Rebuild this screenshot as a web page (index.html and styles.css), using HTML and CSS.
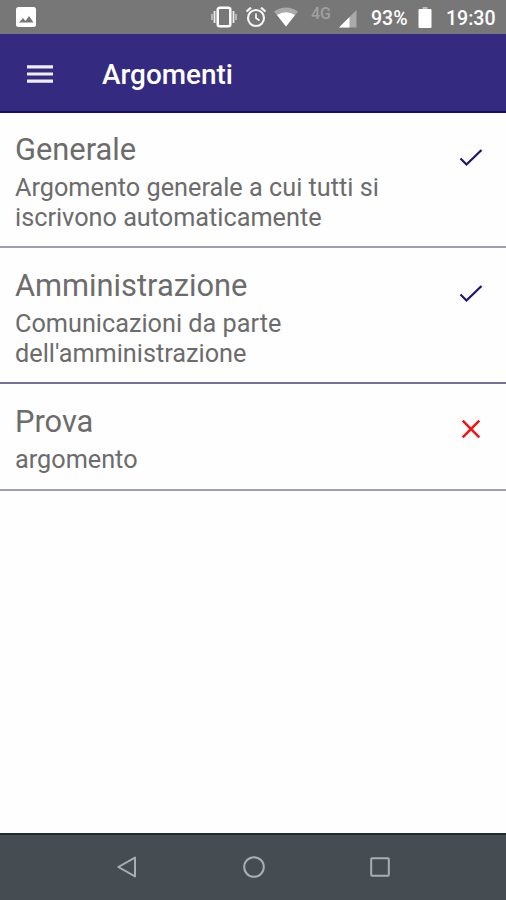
FILE: index.html
```html
<!DOCTYPE html>
<html lang="it">
<head>
<meta charset="utf-8">
<title>Argomenti</title>
<link rel="stylesheet" href="styles.css">
</head>
<body>
<div class="status">
  <svg class="photo" width="20" height="20" viewBox="0 0 20 20"><rect width="20" height="20" rx="2.5" fill="#fff"/><path d="M3 15.500L7 11l2.500 3 3.500-5 4.500 6.500z" fill="#777"/></svg>
  <svg class="vibrate" width="26" height="22" viewBox="0 0 26 22" fill="none" stroke="#fff"><rect x="6.700" y="1.700" width="12.600" height="18.600" rx="2" stroke-width="2.500"/><path d="M3.500 5v12M22.500 5v12" stroke-width="1.800" opacity=".85"/><path d="M1 8v6M25 8v6" stroke-width="1.400" opacity=".65"/></svg>
  <svg class="alarm" width="22" height="22" viewBox="0 0 22 22" fill="none" stroke="#f4f4f4" stroke-width="2.200"><circle cx="11" cy="12" r="8"/><path d="M1.500 5.500L6 1.700M20.500 5.500L16 1.700"/><path d="M11 7.500V12l3.500 2.500" stroke-width="1.800"/></svg>
  <svg class="wifi" width="24" height="20" viewBox="0 0 24 20"><path d="M0 4.500Q12-3.500 24 4.500L12 19.500z" fill="#aaa"/><path d="M3 8Q12 2.500 21 8L12 19.500z" fill="#fff"/></svg>
  <span class="network">4G</span>
  <svg class="signal" width="18" height="18" viewBox="0 0 18 18"><path d="M0 17.500L17.500 0v17.500z" fill="#aaa"/><path d="M0 17.500L10.500 7v10.500z" fill="#fff"/></svg>
  <span class="percent">93%</span>
  <svg class="battery" width="14" height="21" viewBox="0 0 14 21"><path d="M4.500 0h5v2h-5z" fill="#bbb"/><rect x=".5" y="2" width="13" height="19" rx="1" fill="#fff"/></svg>
  <span class="time">19:30</span>
</div>
<header class="appbar">
  <svg width="28" height="20" viewBox="0 0 28 20" stroke="#eeedf8" stroke-width="3.200"><path d="M1 2.800h26M1 10h26M1 17.200h26"/></svg>
  <h1>Argomenti</h1>
</header>
<main>
  <section class="topic">
    <div><h2>Generale</h2><p>Argomento generale a cui tutti si<br>iscrivono automaticamente</p></div>
    <svg class="mark" width="24" height="24" viewBox="0 0 24 24"><path d="M1.500 12.500L7.500 18.500 22.500 4"/></svg>
  </section>
  <section class="topic middle">
    <div><h2>Amministrazione</h2><p>Comunicazioni da parte<br>dell'amministrazione</p></div>
    <svg class="mark" width="24" height="24" viewBox="0 0 24 24"><path d="M1.500 12.500L7.500 18.500 22.500 4"/></svg>
  </section>
  <section class="topic last">
    <div><h2>Prova</h2><p>argomento</p></div>
    <svg class="mark off" width="24" height="24" viewBox="0 0 24 24"><path d="M3.700 3.700l16.600 16.600M20.300 3.700L3.700 20.300"/></svg>
  </section>
</main>
<nav class="navbar">
  <svg width="24" height="24" viewBox="0 0 24 24"><path d="M3.300 12L20 2.600v18.800z"/></svg>
  <svg width="24" height="24" viewBox="0 0 24 24"><circle cx="12" cy="12" r="9.800"/></svg>
  <svg width="24" height="24" viewBox="0 0 24 24"><rect x="3.200" y="3.200" width="17.600" height="17.600" rx="1"/></svg>
</nav>
</body>
</html>
```
FILE: styles.css
```css
* { box-sizing: border-box; }
body {
  margin: 0;
  height: 900px;
  display: flex;
  flex-direction: column;
  overflow: hidden;
  background: #fefefe;
  color: #6c6c6c;
  font-family: Roboto, "Liberation Sans", sans-serif;
}
h1, h2, p { margin: 0; }
svg { display: block; flex: none; }
.status {
  height: 34px;
  flex: none;
  display: flex;
  align-items: center;
  padding-left: 16px;
  background: #777;
  color: #fff;
  font-size: 19.5px;
  font-weight: 500;
  white-space: nowrap;
}
.photo { margin: 0 175px 0 0; }
.alarm { margin-left: 8px; }
.wifi { margin-left: 7px; }
.network { width: 21px; margin: -7px 0 0 13px; font-size: 16px; font-weight: 500; color: #a0a0a0; }
.signal { margin: 3px 0 0 7px; }
.percent { width: 38px; margin: 2px 0 0 14px; }
.battery { margin: 0 0 0 9px; }
.time { margin: 2px 0 0 14px; }
.appbar {
  height: 79px;
  flex: none;
  display: flex;
  align-items: center;
  padding: 2px 0 0 26px;
  background: #342a80;
  border-bottom: 2px solid #1b0c69;
  color: #fff;
}
h1 { margin: 3px 0 0 48px; font-size: 27.9px; line-height: 32px; font-weight: 500; }
main { flex: 1; }
.topic {
  height: 135px;
  display: flex;
  justify-content: space-between;
  padding: 19px 23px 0 15px;
  border-bottom: 2px solid #a19db5;
}
.middle { height: 136px; padding-top: 20px; border-color: #747099; }
.last { height: 107px; padding-top: 20px; }
h2 { font-size: 30.8px; line-height: 36px; font-weight: 400; }
p { margin-top: 5px; font-size: 25.25px; line-height: 29.5px; }
.mark { margin-top: 14px; fill: none; stroke: #211572; stroke-width: 2.3; }
.off { margin-top: 13px; stroke: #f01418; stroke-width: 2.6; }
.navbar {
  height: 67px;
  flex: none;
  display: flex;
  justify-content: center;
  gap: 102.5px;
  padding: 20px 0 0 1px;
  background: #454d52;
  border-top: 2px solid #1d2b2d;
}
.navbar svg { fill: none; stroke: #a8afb1; stroke-width: 2; stroke-linejoin: round; }
```
